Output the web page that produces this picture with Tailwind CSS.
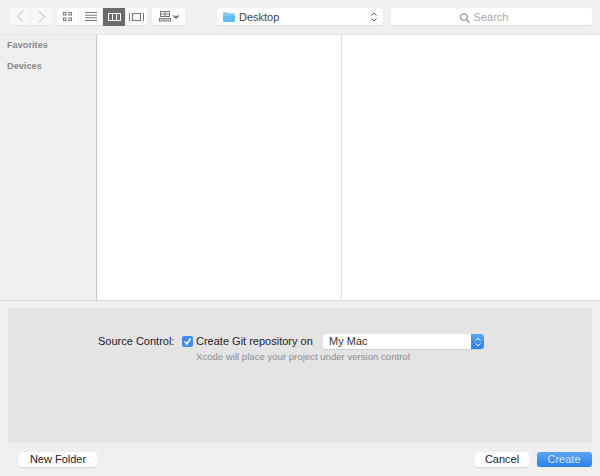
<!DOCTYPE html>
<html lang="en">
<head>
  <meta charset="UTF-8"/>
  <title>New Project</title>
  <script src="https://cdn.jsdelivr.net/npm/@tailwindcss/browser@4"></script>
</head>
<body class="w-[600px] h-[476px] overflow-hidden bg-[#efefef] font-['Liberation_Sans',sans-serif] text-[11px] text-[#222]">

  <!-- Toolbar -->
  <div class="h-[34px] pt-2 pl-[9px] flex items-start">
    <div class="flex gap-px">
      <div class="w-[21px] h-[17px] bg-[#f8f8f8] rounded-l-[3px] shadow-[0_1px_0_#e6e6e6] flex items-center justify-center">
        <svg width="8" height="13" viewBox="0 0 8 13" fill="none" stroke="#d0d0d0" stroke-width="1.2"><path d="M7 1L1.5 6.5L7 12"/></svg>
      </div>
      <div class="w-[21px] h-[17px] bg-[#f8f8f8] rounded-r-[3px] shadow-[0_1px_0_#e6e6e6] flex items-center justify-center">
        <svg width="8" height="13" viewBox="0 0 8 13" fill="none" stroke="#d0d0d0" stroke-width="1.2"><path d="M1 1L6.5 6.5L1 12"/></svg>
      </div>
    </div>
    <div class="flex ml-[5px] gap-px">
      <div class="w-[21px] h-[17px] bg-white rounded-l-[3px] shadow-[0_1px_0_#e2e2e2] flex items-center justify-center">
        <svg width="9" height="9" viewBox="0 0 9 9" fill="none" stroke="#777" stroke-width="1"><rect x="0.5" y="0.5" width="2.5" height="2.5"/><rect x="6" y="0.5" width="2.5" height="2.5"/><rect x="0.5" y="6" width="2.5" height="2.5"/><rect x="6" y="6" width="2.5" height="2.5"/></svg>
      </div>
      <div class="w-[23px] h-[17px] bg-white shadow-[0_1px_0_#e2e2e2] flex items-center justify-center">
        <svg width="12" height="9" viewBox="0 0 12 9" stroke="#777" stroke-width="1"><path d="M0 .5H12M0 3.2H12M0 5.8H12M0 8.5H12"/></svg>
      </div>
      <div class="w-[22px] h-[18px] bg-[#6b6b6b] flex items-center justify-center">
        <svg width="13" height="8" viewBox="0 0 13 8" fill="none" stroke="#fff" stroke-width="1"><rect x="0.5" y="0.5" width="12" height="7"/><path d="M4.5 0V8M8.5 0V8"/></svg>
      </div>
      <div class="w-[21px] h-[17px] bg-white rounded-r-[3px] shadow-[0_1px_0_#e2e2e2] flex items-center justify-center">
        <svg width="15" height="8" viewBox="0 0 15 8" fill="none" stroke="#777" stroke-width="1"><rect x="3.5" y="0.5" width="8" height="7"/><path d="M.5 0V8M14.5 0V8"/></svg>
      </div>
    </div>
    <div class="w-[33px] h-[17px] ml-[5px] bg-white rounded-[3px] shadow-[0_1px_0_#e2e2e2] flex items-center justify-center gap-[2px]">
      <svg width="12" height="11" viewBox="0 0 12 11" fill="none" stroke="#777" stroke-width="1"><rect x="1.5" y="0.5" width="9" height="5"/><path d="M6 .5V5.500M1.500 3H10.500"/><rect x="0.500" y="7.500" width="2.500" height="2.500"/><rect x="4.750" y="7.500" width="2.500" height="2.500"/><rect x="9" y="7.500" width="2.500" height="2.500"/></svg>
      <svg width="6" height="4" viewBox="0 0 6 4" fill="none" stroke="#444" stroke-width="1.200"><path d="M.5 .5L3 3L5.500 .5"/></svg>
    </div>
    <div class="w-[166px] h-[17px] ml-[32px] bg-white rounded-[3px] shadow-[0_1px_0_#e2e2e2] flex items-center pl-[6px] pr-[6px]">
      <svg width="12" height="10" viewBox="0 0 12 10"><path d="M0 1.500Q0 .500 1 .500H4L5 1.500H11Q12 1.500 12 2.500V9Q12 10 11 10H1Q0 10 0 9Z" fill="#62bdf0"/><path d="M0 3H12" stroke="#9ad8f8" stroke-width="1"/></svg>
      <span class="ml-[4px] pt-[2px] text-[11px] leading-[13px] text-[#444]">Desktop</span>
      <svg class="ml-auto" width="6" height="10" viewBox="0 0 6 10" fill="none" stroke="#555" stroke-width="1"><path d="M.5 3.500L3 1L5.500 3.500M.5 6.500L3 9L5.500 6.500"/></svg>
    </div>
    <div class="w-[201px] h-[17px] ml-[8px] bg-white rounded-[3px] shadow-[0_1px_0_#e2e2e2] flex items-center justify-center gap-[4px] pr-[15px] pt-[2px] text-[11px] leading-[13px] text-[#a8a8a8]">
      <svg width="10" height="10" viewBox="0 0 10 10" fill="none" stroke="#8a8a8a" stroke-width="1.100"><circle cx="4" cy="4" r="3.300"/><path d="M6.500 6.500L9.500 9.500"/></svg>
      <span>Search</span>
    </div>
  </div>

  <!-- Browser columns -->
  <div class="h-[267px] flex border-t border-b border-t-[#e6e6e6] border-b-[#dcdcdc]">
    <div class="w-[97px] border-r border-[#c9c9c9] pl-[7px] pt-[4px] font-bold text-[9.2px] text-[#8a8a8a]">
      <div class="h-[21px] leading-[12px]">Favorites</div>
      <div class="leading-[12px]">Devices</div>
    </div>
    <div class="w-[245px] bg-white border-r border-[#dcdcdc]"></div>
    <div class="flex-1 bg-white"></div>
  </div>

  <!-- Source control panel -->
  <div class="mx-2 mt-[7px] h-[135px] bg-[#e4e4e4] rounded-[3px] flex flex-col">
    <div class="h-[17px] mt-[25px] flex items-center">
      <span class="ml-[90px] w-[77px] text-[11px] text-[#222]">Source Control:</span>
      <span class="w-[11px] h-[11px] ml-[7px] bg-[#3f8fe8] rounded-[2px] flex items-center justify-center">
        <svg width="9" height="9" viewBox="0 0 9 9" fill="none" stroke="#fff" stroke-width="1.500"><path d="M1.500 4.500L3.800 7L7.500 1.500"/></svg>
      </span>
      <span class="ml-[3px] w-[127px] text-[11px] text-[#222]">Create Git repository on</span>
      <div class="w-[161px] h-[15px] flex bg-white rounded-[3px] shadow-[0_1px_0_#cfcfcf]">
        <span class="flex-1 pl-[6px] leading-[15px] text-[11px] text-[#333]">My Mac</span>
        <span class="w-[13px] bg-gradient-to-b from-[#5aa5f3] to-[#2a7fe8] rounded-r-[3px] flex items-center justify-center">
          <svg width="6" height="10" viewBox="0 0 6 10" fill="none" stroke="#fff" stroke-width="1"><path d="M.5 3.500L3 1L5.500 3.500M.5 6.500L3 9L5.500 6.500"/></svg>
        </span>
      </div>
    </div>
    <div class="ml-[188px] mt-[1px] text-[9.6px] leading-[12px] text-[#8e8e8e]">Xcode will place your project under version control</div>
  </div>

  <!-- Bottom buttons -->
  <div class="mt-[9px] flex items-center pl-[19px] pr-[8px]">
    <button class="w-[78px] h-[15px] bg-white rounded-[3px] shadow-[0_1px_0_#d8d8d8] text-[11px] leading-[15px] text-[#222]">New Folder</button>
    <button class="ml-auto w-[54px] h-[15px] bg-white rounded-[3px] shadow-[0_1px_0_#d8d8d8] text-[11px] leading-[15px] text-[#222]">Cancel</button>
    <button class="ml-[8px] w-[55px] h-[15px] pr-[1px] bg-gradient-to-b from-[#5aa5f3] to-[#2a7fe8] rounded-[3px] text-[11px] leading-[15px] text-[#d5e6fb]">Create</button>
  </div>
</body>
</html>
